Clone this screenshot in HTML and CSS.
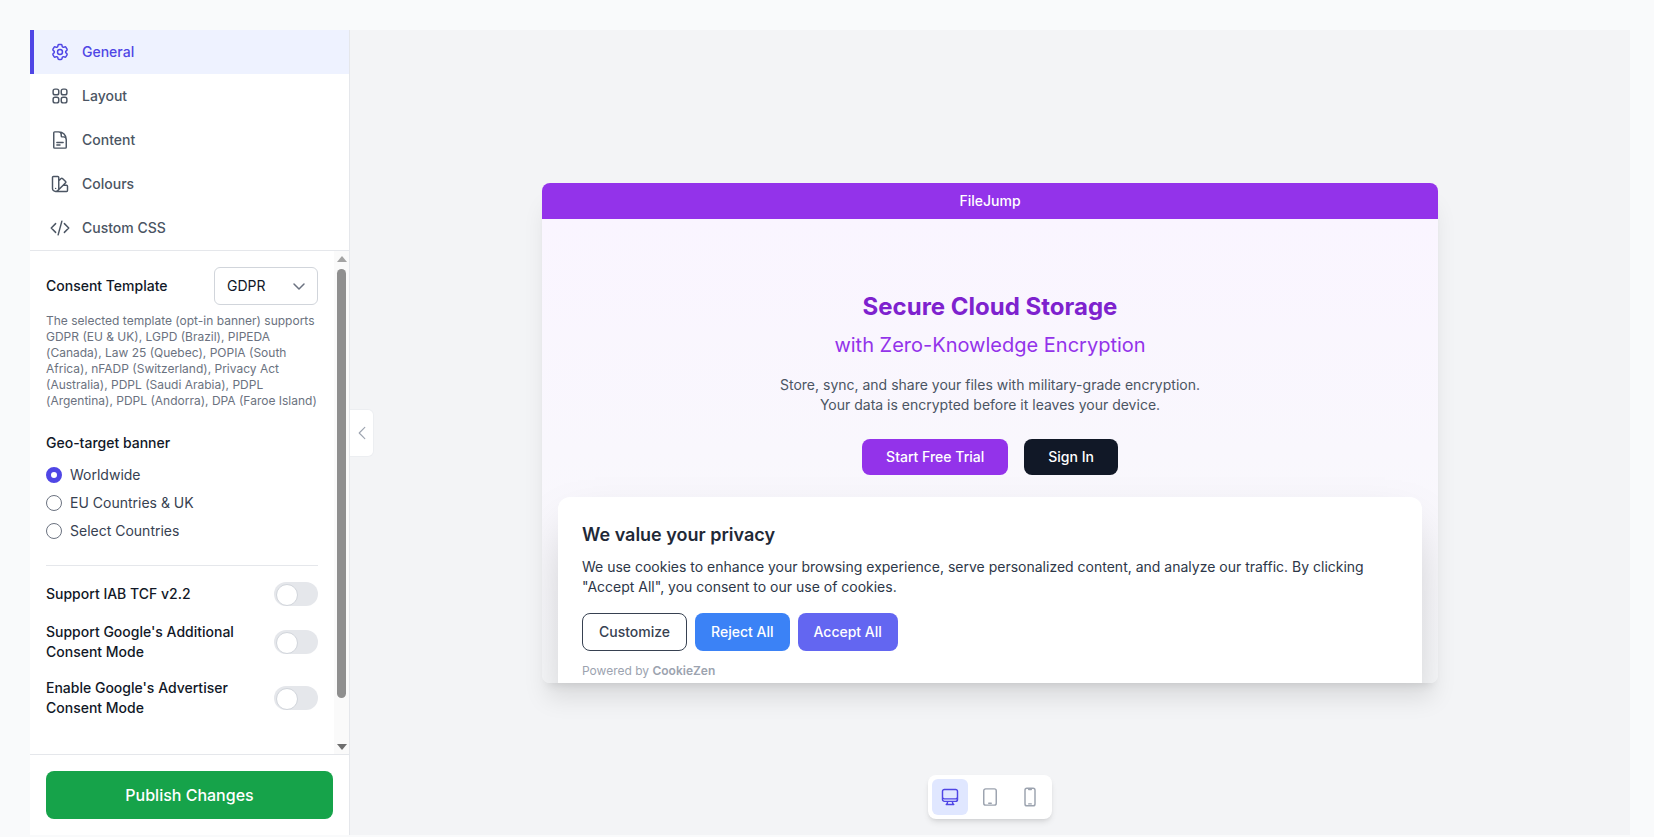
FILE: index.html
```html
<!DOCTYPE html>
<html lang="en">
<head>
<meta charset="utf-8">
<title>Banner editor</title>
<link rel="stylesheet" href="styles.css">
</head>
<body>
<div class="app">
  <aside class="sidebar">
    <nav class="nav">
      <a class="nav-item active"><svg class="icon" viewBox="0 0 24 24"><path d="M9.594 3.94c.09-.542.56-.94 1.11-.94h2.593c.55 0 1.02.398 1.11.94l.213 1.281c.063.374.313.686.645.87.074.04.147.083.22.127.325.196.72.257 1.075.124l1.217-.456a1.125 1.125 0 0 1 1.37.49l1.296 2.247a1.125 1.125 0 0 1-.26 1.431l-1.003.827c-.293.241-.438.613-.43.992a7.723 7.723 0 0 1 0 .255c-.008.378.137.75.43.991l1.004.827c.424.35.534.955.26 1.43l-1.298 2.247a1.125 1.125 0 0 1-1.369.491l-1.217-.456c-.355-.133-.75-.072-1.076.124a6.47 6.47 0 0 1-.22.128c-.331.183-.581.495-.644.869l-.213 1.281c-.09.543-.56.94-1.11.94h-2.594c-.55 0-1.019-.398-1.11-.94l-.213-1.281c-.062-.374-.312-.686-.644-.87a6.52 6.52 0 0 1-.22-.127c-.325-.196-.72-.257-1.076-.124l-1.217.456a1.125 1.125 0 0 1-1.369-.49l-1.297-2.247a1.125 1.125 0 0 1 .26-1.431l1.004-.827c.292-.24.437-.613.43-.991a6.932 6.932 0 0 1 0-.255c.007-.38-.138-.751-.43-.992l-1.004-.827a1.125 1.125 0 0 1-.26-1.43l1.297-2.247a1.125 1.125 0 0 1 1.37-.491l1.216.456c.356.133.751.072 1.076-.124.072-.044.146-.086.22-.128.332-.183.582-.495.644-.869l.214-1.28Z"/><path d="M15 12a3 3 0 1 1-6 0 3 3 0 0 1 6 0Z"/></svg><span>General</span></a>
      <a class="nav-item"><svg class="icon" viewBox="0 0 24 24"><path d="M3.75 6A2.25 2.25 0 0 1 6 3.75h2.25A2.25 2.25 0 0 1 10.5 6v2.25a2.25 2.25 0 0 1-2.25 2.25H6a2.25 2.25 0 0 1-2.25-2.25V6ZM3.75 15.75A2.25 2.25 0 0 1 6 13.5h2.25a2.25 2.25 0 0 1 2.25 2.25V18a2.25 2.25 0 0 1-2.25 2.25H6A2.25 2.25 0 0 1 3.75 18v-2.25ZM13.5 6a2.25 2.25 0 0 1 2.25-2.25H18A2.25 2.25 0 0 1 20.25 6v2.25A2.25 2.25 0 0 1 18 10.5h-2.25a2.25 2.25 0 0 1-2.25-2.25V6ZM13.5 15.75a2.25 2.25 0 0 1 2.25-2.25H18a2.25 2.25 0 0 1 2.25 2.25V18A2.25 2.25 0 0 1 18 20.25h-2.25A2.25 2.25 0 0 1 13.5 18v-2.25Z"/></svg><span>Layout</span></a>
      <a class="nav-item"><svg class="icon" viewBox="0 0 24 24"><path d="M19.5 14.25v-2.625a3.375 3.375 0 0 0-3.375-3.375h-1.5A1.125 1.125 0 0 1 13.5 7.125v-1.5a3.375 3.375 0 0 0-3.375-3.375H8.25m0 12.75h7.5m-7.5 3H12M10.5 2.25H5.625c-.621 0-1.125.504-1.125 1.125v17.25c0 .621.504 1.125 1.125 1.125h12.75c.621 0 1.125-.504 1.125-1.125V11.25a9 9 0 0 0-9-9Z"/></svg><span>Content</span></a>
      <a class="nav-item"><svg class="icon" viewBox="0 0 24 24"><path d="M4.098 19.902a3.75 3.75 0 0 0 5.304 0l6.401-6.402M6.75 21A3.75 3.75 0 0 1 3 17.25V4.125C3 3.504 3.504 3 4.125 3h5.25c.621 0 1.125.504 1.125 1.125v4.072M6.75 21a3.75 3.75 0 0 0 3.75-3.75V8.197M6.75 21h13.125c.621 0 1.125-.504 1.125-1.125v-5.25c0-.621-.504-1.125-1.125-1.125h-4.072M10.5 8.197l2.88-2.88c.438-.439 1.15-.439 1.59 0l3.712 3.713c.44.44.44 1.152 0 1.59l-2.879 2.88M6.75 17.25h.008v.008H6.75v-.008Z"/></svg><span>Colours</span></a>
      <a class="nav-item"><svg class="icon" viewBox="0 0 24 24"><path d="M17.25 6.75 22.5 12l-5.25 5.25m-10.5 0L1.5 12l5.25-5.25m7.5-3-4.5 16.5"/></svg><span>Custom CSS</span></a>
    </nav>

    <div class="panel-wrap">
      <div class="panel">
        <div class="template-row">
          <label class="field-label">Consent Template</label>
          <div class="select"><span>GDPR</span><svg class="select-chevron" viewBox="0 0 20 20"><path d="M5 8l5 5 5-5"/></svg></div>
        </div>
        <p class="help">The selected template (opt-in banner) supports GDPR (EU &amp; UK), LGPD (Brazil), PIPEDA (Canada), Law 25 (Quebec), POPIA (South Africa), nFADP (Switzerland), Privacy Act (Australia), PDPL (Saudi Arabia), PDPL (Argentina), PDPL (Andorra), DPA (Faroe Island)</p>
        <h3 class="field-label geo-title">Geo-target banner</h3>
        <div class="radios">
          <div class="radio-row"><span class="radio checked"></span><span>Worldwide</span></div>
          <div class="radio-row"><span class="radio"></span><span>EU Countries &amp; UK</span></div>
          <div class="radio-row"><span class="radio"></span><span>Select Countries</span></div>
        </div>
        <hr class="divider">
        <div class="toggles">
          <div class="toggle-row"><span>Support IAB TCF v2.2</span><span class="toggle"></span></div>
          <div class="toggle-row"><span>Support Google's Additional<br>Consent Mode</span><span class="toggle"></span></div>
          <div class="toggle-row"><span>Enable Google's Advertiser<br>Consent Mode</span><span class="toggle"></span></div>
        </div>
      </div>
      <div class="scrollbar" aria-hidden="true">
        <span class="arrow up"></span>
        <span class="thumb"></span>
        <span class="arrow down"></span>
      </div>
    </div>

    <div class="publish-bar">
      <button class="publish">Publish Changes</button>
    </div>
  </aside>

  <main class="main">
    <button class="collapse" aria-label="Collapse"><svg viewBox="0 0 24 24"><path d="M15.75 19.5 8.25 12l7.5-7.5"/></svg></button>

    <section class="preview">
      <header class="preview-bar">FileJump</header>
      <div class="preview-body">
        <div class="hero">
          <h1>Secure Cloud Storage</h1>
          <h2>with Zero-Knowledge Encryption</h2>
          <p>Store, sync, and share your files with military-grade encryption.<br>Your data is encrypted before it leaves your device.</p>
          <div class="hero-actions">
            <a class="hero-btn primary">Start Free Trial</a>
            <a class="hero-btn dark">Sign In</a>
          </div>
        </div>
        <div class="banner">
          <h4>We value your privacy</h4>
          <p>We use cookies to enhance your browsing experience, serve personalized content, and analyze our traffic. By clicking "Accept All", you consent to our use of cookies.</p>
          <div class="banner-actions">
            <a class="b-btn outline">Customize</a>
            <a class="b-btn reject">Reject All</a>
            <a class="b-btn accept">Accept All</a>
          </div>
          <div class="powered">Powered by <b>CookieZen</b></div>
        </div>
      </div>
    </section>

    <div class="devices">
      <a class="device active"><svg viewBox="0 0 24 24"><path d="M9 17.25v1.007a3 3 0 0 1-.879 2.122L7.5 21h9l-.621-.621A3 3 0 0 1 15 18.257V17.25m6-12V15a2.25 2.25 0 0 1-2.25 2.25H5.25A2.25 2.25 0 0 1 3 15V5.25m18 0A2.25 2.25 0 0 0 18.75 3H5.25A2.25 2.25 0 0 0 3 5.25m18 0V12a2.25 2.25 0 0 1-2.25 2.25H5.25A2.25 2.25 0 0 1 3 12V5.25"/></svg></a>
      <a class="device"><svg viewBox="0 0 24 24"><path d="M10.5 19.5h3m-6.75 2.25h10.5a2.25 2.25 0 0 0 2.25-2.25v-15a2.25 2.25 0 0 0-2.25-2.25H6.75A2.25 2.25 0 0 0 4.5 4.5v15a2.25 2.25 0 0 0 2.25 2.25Z"/></svg></a>
      <a class="device"><svg viewBox="0 0 24 24"><path d="M10.5 1.5H8.25A2.25 2.25 0 0 0 6 3.75v16.5a2.25 2.25 0 0 0 2.25 2.25h7.5A2.25 2.25 0 0 0 18 20.25V3.75a2.25 2.25 0 0 0-2.25-2.25H13.5m-3 0V3h3V1.5m-3 0h3m-3 18.75h3"/></svg></a>
    </div>
  </main>
</div>
</body>
</html>
```

FILE: styles.css
```css
* { box-sizing: border-box; }

html, body { height: 100%; }

body {
  margin: 0;
  background: #f9fafb;
  font-family: Inter, "Liberation Sans", sans-serif;
  font-size: 14px;
  line-height: 20px;
  color: #111827;
  overflow: hidden;
}

.app {
  display: flex;
  width: 1600px;
  height: 805px;
  margin: 30px 0 0 30px;
}

/* Sidebar */
.sidebar {
  width: 320px;
  flex: none;
  display: flex;
  flex-direction: column;
  background: #fff;
  border-right: 1px solid #e5e7eb;
}

.nav { border-bottom: 1px solid #e5e7eb; flex: none; height: 221px; }

.nav-item {
  display: flex;
  align-items: center;
  gap: 12px;
  height: 44px;
  padding-left: 20px;
  font-weight: 500;
  color: #4b5563;
}

.nav-item.active {
  padding-left: 16px;
  border-left: 4px solid #4f46e5;
  background: #eef2ff;
  color: #4f46e5;
}

.icon {
  width: 20px;
  height: 20px;
  fill: none;
  stroke: currentColor;
  stroke-width: 1.75;
  stroke-linecap: round;
  stroke-linejoin: round;
}

.panel-wrap { flex: 1; min-height: 0; display: flex; }

.panel { flex: 1; min-width: 0; padding: 16px 16px 0; }

.template-row {
  display: flex;
  align-items: center;
  justify-content: space-between;
}

.field-label { font-size: 14px; font-weight: 500; color: #111827; margin: 0; }

.select {
  width: 104px;
  height: 38px;
  display: flex;
  align-items: center;
  justify-content: space-between;
  padding: 0 8px 0 12px;
  border: 1px solid #d1d5db;
  border-radius: 6px;
  color: #111827;
}

.select-chevron {
  width: 20px;
  height: 20px;
  fill: none;
  stroke: #6b7280;
  stroke-width: 1.5;
  stroke-linecap: round;
  stroke-linejoin: round;
}

.help {
  margin: 8px 0 0;
  font-size: 12px;
  line-height: 16px;
  color: #6b7280;
}

.geo-title { margin-top: 24px; }

.radios { margin-top: 8px; display: flex; flex-direction: column; }

.radio-row {
  display: flex;
  align-items: center;
  gap: 8px;
  height: 28px;
  color: #374151;
}

.radio {
  width: 16px;
  height: 16px;
  border: 1px solid #6b7280;
  border-radius: 50%;
  background: #fff;
  flex: none;
}

.radio.checked { border: 5px solid #4f46e5; }

.divider {
  margin: 20px 0 0;
  border: 0;
  border-top: 1px solid #e5e7eb;
}

.toggles {
  margin-top: 16px;
  display: flex;
  flex-direction: column;
  gap: 16px;
}

.toggle-row {
  display: flex;
  align-items: center;
  justify-content: space-between;
  font-weight: 500;
  color: #111827;
}

.toggle {
  position: relative;
  flex: none;
  width: 44px;
  height: 24px;
  border-radius: 12px;
  background: #e5e7eb;
}

.toggle::after {
  content: "";
  position: absolute;
  left: 2px;
  top: 2px;
  width: 20px;
  height: 20px;
  border-radius: 50%;
  background: #fff;
  border: 1px solid #d1d5db;
}

.scrollbar {
  flex: none;
  width: 15px;
  display: flex;
  flex-direction: column;
  align-items: center;
  background: #fafafa;
}

.arrow { width: 0; height: 0; flex: none; border-left: 5px solid transparent; border-right: 5px solid transparent; }
.arrow.up { margin-top: 5px; border-bottom: 6px solid #a3a3a3; }
.arrow.down { margin-top: auto; margin-bottom: 4px; border-top: 6px solid #6e6e6e; }

.thumb {
  margin-top: 7px;
  width: 9px;
  height: 429px;
  background: #8f8f8f;
  border-radius: 5px;
}

.publish-bar {
  flex: none;
  height: 81px;
  padding: 16px;
  border-top: 1px solid #e5e7eb;
}

.publish {
  display: block;
  width: 100%;
  height: 48px;
  border: 0;
  border-radius: 8px;
  background: #16a34a;
  color: #fff;
  font: 500 16px/24px Inter, "Liberation Sans", sans-serif;
}

/* Main */
.main {
  position: relative;
  flex: 1;
  min-width: 0;
  display: flex;
  align-items: center;
  justify-content: center;
  background: #f3f4f6;
}

.collapse {
  position: absolute;
  left: 0;
  top: 379px;
  width: 24px;
  height: 48px;
  padding: 0;
  display: flex;
  align-items: center;
  justify-content: center;
  background: #fff;
  border: 1px solid #eceef1;
  border-left: 0;
  border-radius: 0 6px 6px 0;
}

.collapse svg {
  width: 18px;
  height: 18px;
  fill: none;
  stroke: #9ca3af;
  stroke-width: 1.5;
  stroke-linecap: round;
  stroke-linejoin: round;
}

.preview {
  display: flex;
  flex-direction: column;
  width: 896px;
  height: 500px;
  border-radius: 8px;
  overflow: hidden;
  box-shadow: 0 20px 25px -5px rgba(0,0,0,.1), 0 8px 10px -6px rgba(0,0,0,.1);
}

.preview-bar {
  flex: none;
  height: 36px;
  display: flex;
  align-items: center;
  justify-content: center;
  background: #9333ea;
  color: #fff;
  font-weight: 500;
}

.preview-body {
  position: relative;
  flex: 1;
  min-height: 0;
  background: linear-gradient(to bottom, #faf5ff, #f8f9fb);
}

.hero { padding-top: 72px; text-align: center; }

.hero h1 {
  margin: 0;
  font-size: 24px;
  line-height: 32px;
  font-weight: 700;
  color: #7e22ce;
}

.hero h2 {
  margin: 7px 0 0;
  font-size: 20px;
  line-height: 30px;
  font-weight: 400;
  color: #9333ea;
}

.hero p {
  margin: 15px 0 0;
  color: #4b5563;
}

.hero-actions {
  margin-top: 24px;
  display: flex;
  justify-content: center;
  gap: 16px;
}

.hero-btn {
  height: 36px;
  display: flex;
  align-items: center;
  padding: 0 24px;
  border-radius: 8px;
  color: #fff;
  font-weight: 500;
}

.hero-btn.primary { background: #9333ea; }
.hero-btn.dark { background: #111827; }

.banner {
  position: absolute;
  left: 16px;
  right: 16px;
  top: 278px;
  padding: 24px;
  background: #fff;
  border-radius: 12px;
  box-shadow: 0 25px 50px -12px rgba(0,0,0,.25);
  color: #2d3748;
}

.banner h4 {
  margin: 0;
  font-size: 18px;
  line-height: 28px;
  font-weight: 600;
  color: #1f2937;
}

.banner p { margin: 8px 0 0; color: #2d3748; }

.banner-actions { margin-top: 16px; display: flex; gap: 8px; }

.b-btn {
  height: 38px;
  display: flex;
  align-items: center;
  padding: 0 16px;
  border-radius: 8px;
  font-weight: 500;
  color: #fff;
}

.b-btn.outline { border: 1px solid #374151; color: #374151; background: #fff; }
.b-btn.reject { background: #3b82f6; }
.b-btn.accept { background: #6366f1; }

.powered {
  margin-top: 12px;
  font-size: 12px;
  line-height: 16px;
  color: #9ca3af;
}

.powered b { font-weight: 600; }

.devices {
  position: absolute;
  left: 578px;
  top: 745px;
  display: flex;
  gap: 4px;
  padding: 4px;
  background: #fff;
  border-radius: 8px;
  box-shadow: 0 4px 6px -1px rgba(0,0,0,.1), 0 2px 4px -2px rgba(0,0,0,.1);
}

.device {
  width: 36px;
  height: 36px;
  display: flex;
  align-items: center;
  justify-content: center;
  border-radius: 6px;
  color: #9ca3af;
}

.device.active { background: #e0e7ff; color: #4f46e5; }

.device svg {
  width: 20px;
  height: 20px;
  fill: none;
  stroke: currentColor;
  stroke-width: 1.75;
  stroke-linecap: round;
  stroke-linejoin: round;
}
```
